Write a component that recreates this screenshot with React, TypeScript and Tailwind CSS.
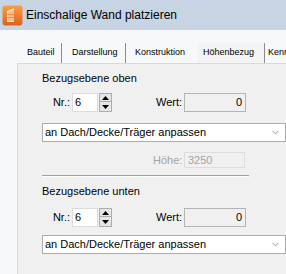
import { ChevronDown } from 'lucide-react';

const tabs = [
    { label: 'Bauteil', w: 'w-[44px]', pl: 'pl-[9px]' },
    { label: 'Darstellung', w: 'w-[64px]', pl: 'pl-[10px]' },
    { label: 'Konstruktion', w: 'w-[71px]', pl: 'pl-[9px]' },
    { label: 'Höhenbezug', w: 'w-[68px]', pl: 'pl-[6px]', active: true },
    { label: 'Kennwerte', w: 'w-[60px]', pl: 'pl-[3px]' },
];

function AppIcon() {
    return (
        <svg width="21" height="21" viewBox="0 0 21 21">
            <defs>
                <linearGradient id="ic" x1="0" y1="0" x2="0" y2="1">
                    <stop offset="0" stopColor="#f6a04a" />
                    <stop offset="1" stopColor="#e15f16" />
                </linearGradient>
            </defs>
            <rect x="0.5" y="0.5" width="20" height="20" rx="3" fill="url(#ic)" />
            <path d="M5 17 V6 L12 3 V17 Z" fill="#fbe3c8" />
            <path d="M7 7 V16 M9 6 V16 M11 5 V16" stroke="#e8843a" strokeWidth="0.8" />
            <path d="M5 9.5 H12 M5 12.5 H12" stroke="#e8843a" strokeWidth="0.8" />
        </svg>
    );
}

function Spinner() {
    return (
        <div className="flex flex-col w-[13px] h-[19px] ml-[1px]">
            <div className="h-[9px] border border-[#adadad] bg-[#e5e5e5] flex items-center justify-center">
                <svg width="7" height="4" viewBox="0 0 7 4"><path d="M0 4 L3.5 0 L7 4 Z" fill="#000" /></svg>
            </div>
            <div className="h-[10px] border border-t-0 border-[#adadad] bg-[#e5e5e5] flex items-center justify-center">
                <svg width="7" height="4" viewBox="0 0 7 4"><path d="M0 0 L3.5 4 L7 0 Z" fill="#000" /></svg>
            </div>
        </div>
    );
}

function NrRow() {
    return (
        <div className="flex items-center h-[19px] text-[11px]">
            <span className="w-[30px] text-right pr-[2px] text-black">Nr.:</span>
            <div className="w-[26px] h-[19px] bg-white border border-[#dcdcdc] pl-[2px] leading-[17px]">6</div>
            <Spinner />
            <span className="ml-[44px] w-[28px] text-black">Wert:</span>
            <div className="w-[62px] h-[19px] bg-[#f0f0f0] border border-[#b4b4b4] pr-[3px] text-right leading-[17px]">0</div>
        </div>
    );
}

function Dropdown() {
    return (
        <div className="w-[244px] h-[19px] bg-white border border-[#adadad] flex items-center justify-between pl-[2px] pr-[4px] text-[11px] text-black">
            <span>an Dach/Decke/Träger anpassen</span>
            <ChevronDown className="w-[11px] h-[11px] text-[#6d6d6d]" strokeWidth={1.5} />
        </div>
    );
}

export default function App() {
    return (
        <div className="w-[286px] h-[274px] overflow-hidden flex flex-col bg-[#f7f8fa] font-['Liberation_Sans',Arial,sans-serif]">
            {/* Title bar */}
            <div className="h-[30px] shrink-0 bg-[#c7d4e3] flex items-center pl-[2px] gap-[3px]">
                <AppIcon />
                <span className="text-[12px] text-black">Einschalige Wand platzieren</span>
            </div>

            {/* Tabs */}
            <div className="flex pl-[18px] pt-[13px] h-[33px] shrink-0">
                {tabs.map(t => (
                    <div
                        key={t.label}
                        className={`${t.w} ${t.pl} h-[20px] shrink-0 flex items-center text-[9px] text-black whitespace-nowrap overflow-hidden ${t.active ? 'border-r border-[#8c8c8c] bg-[#f4f4f4]' : t.label === 'Konstruktion' || t.label === 'Kennwerte' ? '' : 'border-r border-[#8c8c8c]'}`}
                    >
                        {t.label}
                    </div>
                ))}
            </div>

            {/* Panel */}
            <div className="flex-1 ml-[17px] bg-[#f0f0f0] border-l border-t border-[#d9d9d9] pl-[24px] pt-[8px] flex flex-col text-[11px]">
                <div className="h-[13px] leading-[13px] text-black">Bezugsebene oben</div>
                <div className="mt-[8px]"><NrRow /></div>
                <div className="mt-[11px]"><Dropdown /></div>
                <div className="mt-[10px] flex items-center h-[16px] text-[#a3a3a3]">
                    <span className="ml-[111px] w-[31px]">Höhe:</span>
                    <div className="w-[61px] h-[16px] border border-[#dcdcdc] pl-[3px] leading-[14px]">3250</div>
                </div>
                <div className="mt-[7px] w-[207px] border-t border-[#a0a0a0] border-b border-b-white" />
                <div className="mt-[8px] h-[13px] leading-[13px] text-black">Bezugsebene unten</div>
                <div className="mt-[10px]"><NrRow /></div>
                <div className="mt-[8px]"><Dropdown /></div>
            </div>
        </div>
    );
}
